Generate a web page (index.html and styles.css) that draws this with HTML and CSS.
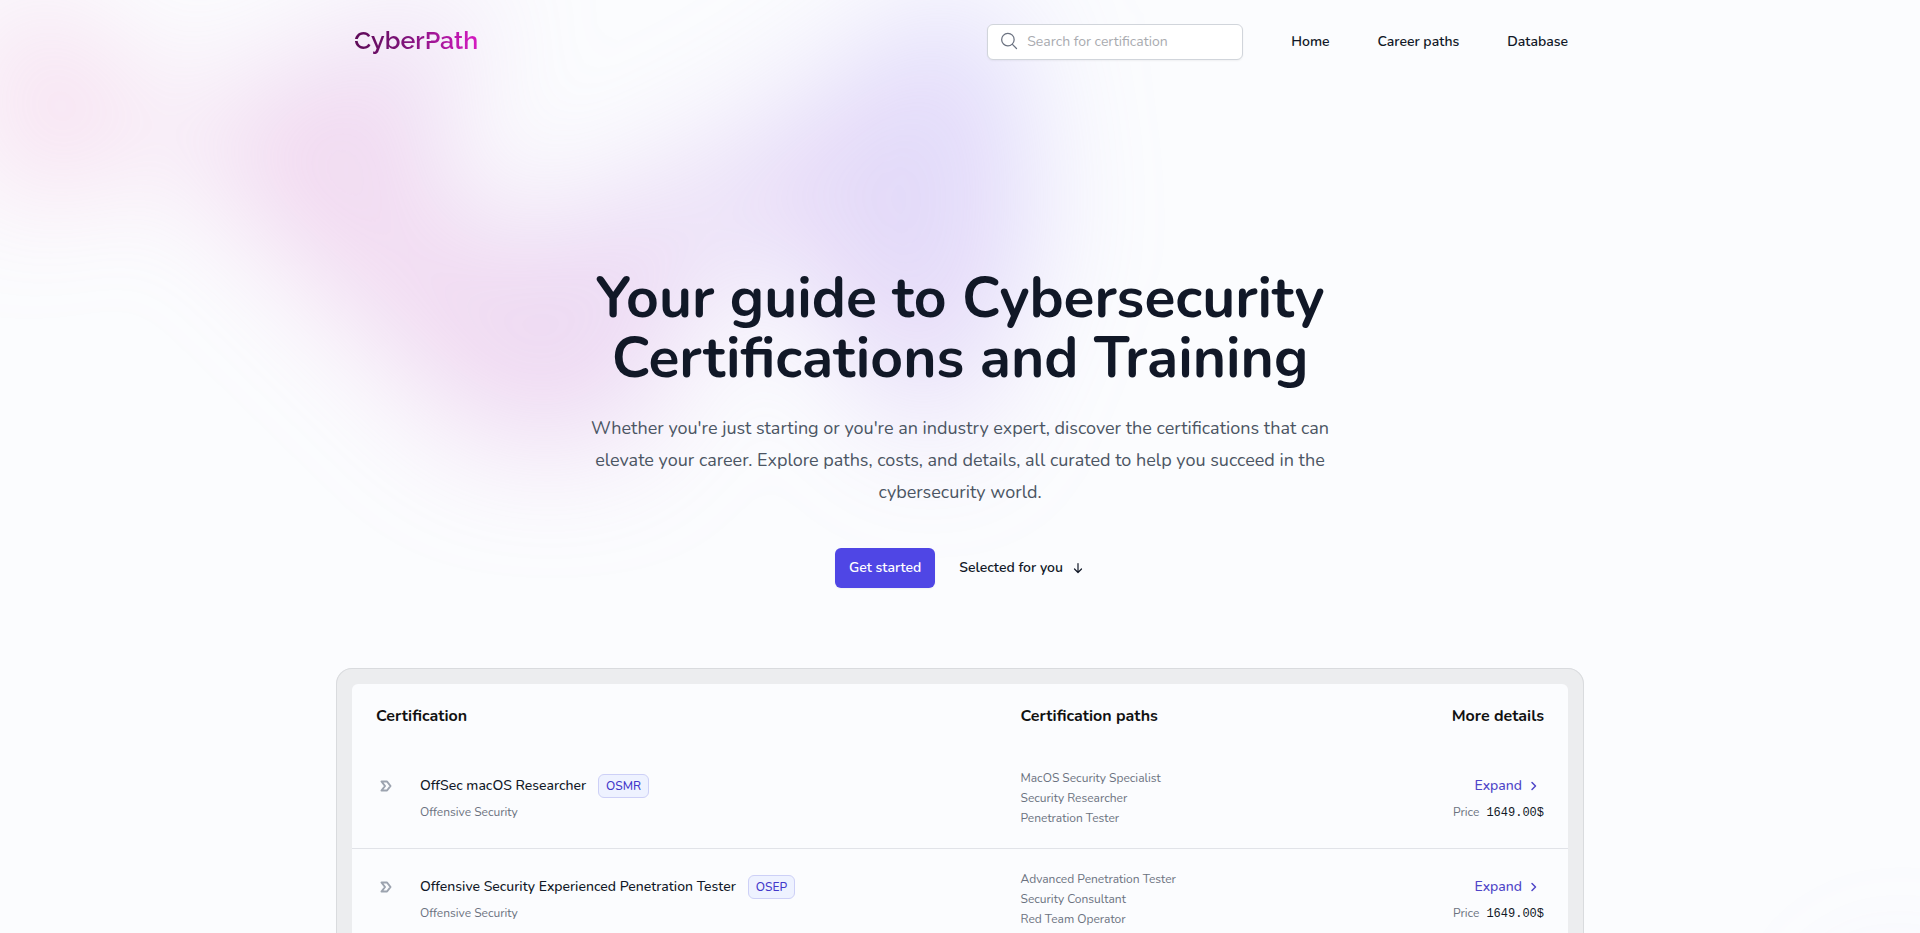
FILE: index.html
```html
<!DOCTYPE html>
<html lang="en">
<head>
<meta charset="utf-8">
<meta name="viewport" content="width=device-width, initial-scale=1">
<title>CyberPath</title>
<link rel="stylesheet" href="styles.css">
</head>
<body>
<div class="page">
  <div class="glow glow-top" aria-hidden="true"><div class="glow-shape glow-shape-left"></div></div>
  <div class="glow glow-bottom" aria-hidden="true"><div class="glow-shape glow-shape-right"></div></div>

  <header class="site-header">
    <a class="logo" href="#">CyberPath</a>
    <nav class="nav">
      <form class="search">
        <label class="search-label" for="search" aria-label="Search">
          <svg class="search-icon" viewBox="0 0 24 24"><path d="m21 21-5.200-5.200m0 0A7.500 7.500 0 1 0 5.200 5.200a7.500 7.500 0 0 0 10.600 10.600Z"/></svg>
        </label>
        <input class="search-input" id="search" type="text" placeholder="Search for certification">
      </form>
      <a class="nav-link" href="#">Home</a>
      <a class="nav-link" href="#">Career paths</a>
      <a class="nav-link" href="#">Database</a>
    </nav>
  </header>

  <main class="main">
    <section class="hero">
      <h1 class="hero-title">Your guide to Cybersecurity Certifications and Training</h1>
      <p class="hero-text">Whether you're just starting or you're an industry expert, discover the certifications that can elevate your career. Explore paths, costs, and details, all curated to help you succeed in the cybersecurity world.</p>
      <div class="hero-actions">
        <button class="button-primary" type="button">Get started</button>
        <a class="link-more" href="#certifications">Selected for you
          <svg class="arrow-down" viewBox="0 0 10 12"><path d="M5 1.500v9M1.500 7 5 10.500 8.500 7"/></svg>
        </a>
      </div>
    </section>

    <section class="frame" id="certifications">
      <table class="certs">
        <thead>
          <tr>
            <th class="col-name" scope="col" colspan="2">Certification</th>
            <th class="col-paths" scope="col">Certification paths</th>
            <th class="col-details" scope="col">More details</th>
          </tr>
        </thead>
        <tbody>
          <tr>
            <td class="cell-icon"><svg class="label-icon" viewBox="0 0 12 12"><path d="M1.500 1.500h5.500l3.500 4.500-3.500 4.500H1.500L5 6Z"/></svg></td>
            <td class="cell-name">
              <div class="cert-title">OffSec macOS Researcher <span class="badge">OSMR</span></div>
              <div class="cert-vendor">Offensive Security</div>
            </td>
            <td class="cell-paths">
              <ul class="paths"><li>MacOS Security Specialist</li><li>Security Researcher</li><li>Penetration Tester</li></ul>
            </td>
            <td class="cell-details">
              <button class="expand" type="button">Expand <svg class="chevron" viewBox="0 0 8 10"><path d="m2 1.500 3.500 3.500L2 8.500"/></svg></button>
              <div class="price">Price <span class="amount">1649.00$</span></div>
            </td>
          </tr>
          <tr>
            <td class="cell-icon"><svg class="label-icon" viewBox="0 0 12 12"><path d="M1.500 1.500h5.500l3.500 4.500-3.500 4.500H1.500L5 6Z"/></svg></td>
            <td class="cell-name">
              <div class="cert-title">Offensive Security Experienced Penetration Tester <span class="badge">OSEP</span></div>
              <div class="cert-vendor">Offensive Security</div>
            </td>
            <td class="cell-paths">
              <ul class="paths"><li>Advanced Penetration Tester</li><li>Security Consultant</li><li>Red Team Operator</li></ul>
            </td>
            <td class="cell-details">
              <button class="expand" type="button">Expand <svg class="chevron" viewBox="0 0 8 10"><path d="m2 1.500 3.500 3.500L2 8.500"/></svg></button>
              <div class="price">Price <span class="amount">1649.00$</span></div>
            </td>
          </tr>
        </tbody>
      </table>
    </section>
  </main>
</div>
</body>
</html>
```
FILE: styles.css
```css
* {
  box-sizing: border-box;
}

body {
  margin: 0;
  background: #fbfcfe;
  color: #111827;
  font-family: Nunito, Roboto, sans-serif;
  font-size: 14px;
  line-height: 24px;
}

a {
  color: inherit;
  text-decoration: none;
}

button {
  border: 0;
  font: inherit;
  cursor: pointer;
}

svg {
  fill: none;
  stroke: currentColor;
  stroke-linecap: round;
  stroke-linejoin: round;
}

.page {
  position: relative;
  isolation: isolate;
  overflow: hidden;
}

/* Blurred colour shapes behind the content */
.glow {
  position: absolute;
  left: 0;
  right: 0;
  z-index: -1;
  overflow: hidden;
  filter: blur(64px);
  pointer-events: none;
}

.glow-top {
  top: -236px;
}

.glow-bottom {
  top: 970px;
}

.glow-shape {
  position: relative;
  width: 1155px;
  aspect-ratio: 1155 / 678;
  background: linear-gradient(to top right, #ff80b5, #9089fc);
  opacity: 0.3;
  clip-path: polygon(74.1% 44.1%, 100% 61.6%, 97.5% 26.9%, 85.5% 0.1%, 80.7% 2%, 72.5% 32.5%, 60.2% 62.4%, 52.4% 68.1%, 47.5% 58.3%, 45.2% 34.5%, 27.5% 76.7%, 0.1% 64.9%, 17.9% 100%, 27.6% 76.8%, 76.1% 97.7%, 74.1% 44.1%);
}

.glow-shape-left {
  left: calc(50% - 480px);
  transform: translateX(-50%) rotate(30deg);
}

.glow-shape-right {
  left: calc(50% + 576px);
  transform: translateX(-50%);
}

.site-header {
  display: flex;
  align-items: center;
  justify-content: space-between;
  max-width: 1280px;
  margin: 0 auto;
  padding: 24px 32px;
}

/* The mask cuts a thin notch into the C and into the stem of the P */
.logo {
  padding: 0 2px 4px;
  background: linear-gradient(to right, #5c0a56, #7d1378 40%, #d81bc4);
  background-clip: text;
  color: transparent;
  font-family: Raleway, Nunito, sans-serif;
  font-size: 25px;
  font-weight: 600;
  line-height: 32px;
  mask:
    linear-gradient(#000 0 0) 0 15px / 6px 2px no-repeat,
    linear-gradient(#000 0 0) 73px 15px / 6px 2px no-repeat,
    linear-gradient(#000 0 0);
  mask-composite: exclude;
}

.nav {
  display: flex;
  align-items: center;
  gap: 48px;
}

.nav-link {
  font-weight: 600;
}

.search {
  display: flex;
  align-items: center;
  gap: 8px;
  width: 256px;
  height: 36px;
  padding: 0 11px;
  border: 1px solid #d1d5db;
  border-radius: 6px;
  background: #fff;
  box-shadow: 0 1px 2px rgb(0 0 0 / 5%);
}

.search-label {
  display: flex;
  padding-bottom: 2px;
}

.search-icon {
  width: 20px;
  height: 20px;
  color: #6b7280;
  stroke-width: 1.5;
}

.search-input {
  flex: 1;
  min-width: 0;
  padding: 0;
  border: 0;
  outline: 0;
  background: none;
  color: inherit;
  font: inherit;
}

.search-input::placeholder {
  color: #a9abb0;
}

.main {
  max-width: 1280px;
  margin: 0 auto;
  padding: 184px 16px 80px;
}

.hero {
  max-width: 768px;
  margin: 0 auto;
  text-align: center;
}

.hero-title {
  margin: 0;
  font-size: 57px;
  font-weight: 700;
  line-height: 60px;
}

.hero-text {
  margin: 24px 0 0;
  color: #4b5563;
  font-size: 18px;
  line-height: 32px;
}

.hero-actions {
  display: flex;
  align-items: center;
  justify-content: center;
  gap: 24px;
  margin-top: 40px;
}

.button-primary {
  padding: 8px 14px;
  border-radius: 6px;
  background: #4f46e5;
  box-shadow: 0 1px 2px rgb(0 0 0 / 5%);
  color: #fff;
  font-weight: 600;
}

.link-more {
  display: flex;
  align-items: center;
  gap: 10px;
  padding-right: 2px;
  font-weight: 600;
}

.arrow-down {
  width: 10px;
  height: 12px;
  stroke-width: 1.2;
}

.frame {
  margin-top: 80px;
  padding: 16px;
  border-radius: 16px;
  background: #ecedef;
  box-shadow: inset 0 0 0 1px #d9dbde;
}

.certs {
  width: 100%;
  border-radius: 6px;
  border-spacing: 0;
  background: #fbfcfe;
}

.certs th {
  padding: 20px 24px;
  color: #111;
  font-size: 16px;
  font-weight: 700;
  text-align: left;
}

.certs td {
  padding: 20px 24px;
  border-bottom: 1px solid #e1e3e8;
}

.certs .col-paths,
.certs .cell-paths {
  width: 31%;
}

.certs .col-details,
.certs .cell-details {
  width: 16%;
  text-align: right;
}

.certs .cell-icon {
  width: 68px;
  padding: 26px 0 20px 28px;
  vertical-align: top;
}

.certs .cell-name {
  padding-left: 0;
}

.label-icon {
  display: block;
  width: 12px;
  height: 24px;
  color: #9ca3af;
  stroke-width: 2;
}

.cert-title {
  display: flex;
  align-items: center;
  gap: 12px;
  font-weight: 500;
}

.badge {
  padding: 1px 7px;
  border: 1px solid #cdd0f7;
  border-radius: 6px;
  background: #eef2ff;
  color: #4338ca;
  font-size: 12px;
  line-height: 20px;
}

.cert-vendor,
.paths,
.price {
  color: #6b7280;
  font-size: 12px;
  line-height: 20px;
}

.cert-vendor,
.price {
  margin-top: 4px;
}

.paths {
  margin: 0;
  padding: 0;
  list-style: none;
}

.expand {
  display: inline-flex;
  align-items: center;
  gap: 8px;
  padding: 0 6px 0 0;
  background: none;
  color: #4f46c8;
  font-weight: 500;
  vertical-align: top;
}

.chevron {
  width: 8px;
  height: 10px;
  stroke-width: 1.5;
}

.price {
  display: flex;
  align-items: baseline;
  justify-content: flex-end;
  gap: 7px;
}

.amount {
  color: #111827;
  font-family: "Liberation Mono", monospace;
}
```
